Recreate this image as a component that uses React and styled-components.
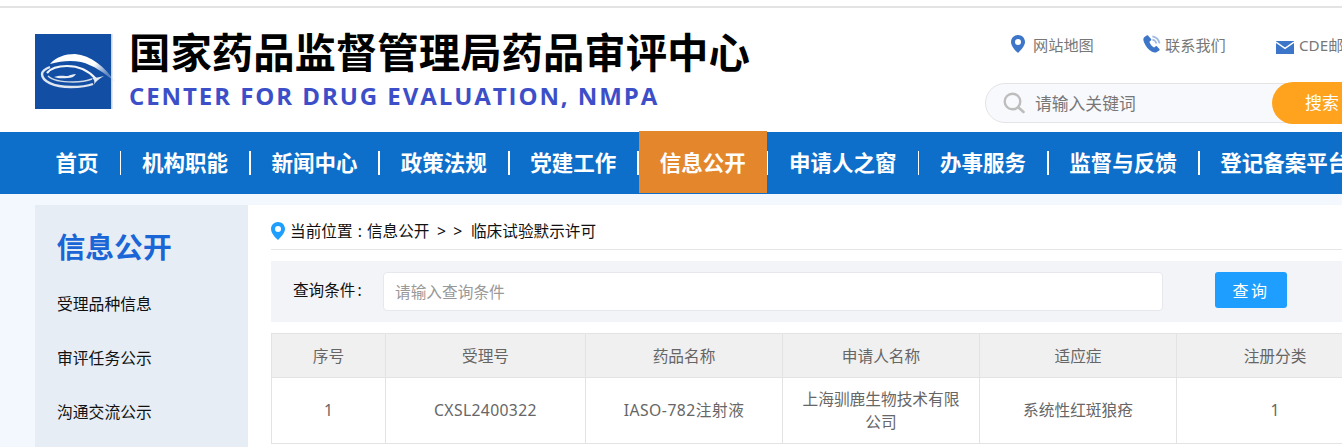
import React from "react";
import styled, { createGlobalStyle } from "styled-components";

const GlobalStyle = createGlobalStyle`
  html, body {
    margin: 0;
    padding: 0;
    overflow: hidden;
    background: #fff;
    font-family: "Noto Sans", "Noto Sans CJK SC", sans-serif;
  }
  * { box-sizing: border-box; }
`;

const Page = styled.div`
  width: 1400px;
  height: 447px;
  overflow: hidden;
  padding-top: 6px;
`;

const Header = styled.header`
  height: 126px;
  border-top: 2px solid #e3e3e3;
  display: flex;
  padding-left: 35px;
`;

const Brand = styled.div`
  display: flex;
  align-items: flex-start;
  gap: 18px;
  padding-top: 26px;
  width: 950px;
`;

const LogoBox = styled.svg`
  display: block;
  flex: none;
  margin-right: -6px;
`;

const BrandText = styled.div`
  display: flex;
  flex-direction: column;
`;

const BrandTitle = styled.div`
  font-family: "Noto Sans CJK SC", sans-serif;
  font-size: 41.4px;
  font-weight: 700;
  line-height: 42px;
  color: #000;
  margin-top: -5px;
  white-space: nowrap;
`;

const BrandSub = styled.div`
  font-family: "Open Sans", "Noto Sans", sans-serif;
  font-size: 24px;
  font-weight: 700;
  line-height: 30px;
  letter-spacing: 1.93px;
  color: #3c4fc9;
  margin-top: 10px;
  white-space: nowrap;
`;

const HeaderRight = styled.div`
  width: 415px;
  display: flex;
  flex-direction: column;
`;

const TopLinks = styled.div`
  display: flex;
  height: 75px;
  padding: 26px 0 0 26px;
  align-items: flex-start;
`;

const TopLink = styled.a`
  display: flex;
  flex: none;
  align-items: center;
  gap: ${(p) => p.$gap}px;
  width: ${(p) => p.$width}px;
  height: 20px;
  font-size: 15.2px;
  color: #777;
  white-space: nowrap;
`;

const MailSvg = styled.svg`
  margin-top: 6px;
`;

const SearchBar = styled.div`
  position: relative;
  height: 40px;
  width: 415px;
  border: 1px solid #e4e4e4;
  border-radius: 20px;
  background: #f8f9fd;
  display: flex;
  align-items: center;
  padding-left: 17px;
  gap: 10px;
`;

const SearchHint = styled.span`
  font-size: 16.8px;
  color: #777;
`;

const SearchButton = styled.div`
  position: absolute;
  top: -2px;
  left: 286px;
  width: 128px;
  height: 42px;
  border-radius: 21px;
  background: #ffa31f;
  color: #fff;
  font-size: 17px;
  line-height: 42px;
  padding-left: 33px;
`;

const Nav = styled.nav`
  height: 62px;
  background: #0e6fca;
  display: flex;
  align-items: stretch;
  padding-left: 35px;
`;

const NavItem = styled.a`
  display: flex;
  align-items: center;
  padding: 0 21px 3px 20.6px;
  font-size: 21.5px;
  font-weight: 700;
  color: #fff;
  white-space: nowrap;
  ${(p) =>
    p.$active &&
    `
    background: #e3862c;
    height: 62px;
    margin-top: -1px;
    padding-bottom: 2px;
  `}
`;

const NavSep = styled.span`
  flex: none;
  width: 1.8px;
  height: 24px;
  align-self: center;
  background: #fff;
  position: relative;
  z-index: 1;
`;

const Body = styled.div`
  background: #f3f8ff;
  padding: 11px 0 0 35px;
  height: 253px;
  display: flex;
`;

const Sidebar = styled.aside`
  width: 213px;
  flex: none;
  background: #e7edf5;
  padding: 24px 0 0 22px;
`;

const SideTitle = styled.div`
  font-size: 28.8px;
  font-weight: 700;
  line-height: 36px;
  color: #1a66d6;
  margin-bottom: 12px;
  margin-left: -0.5px;
`;

const SideItem = styled.div`
  height: 54px;
  line-height: 54px;
  font-size: 15.8px;
  color: #111;
`;

const Main = styled.main`
  flex: 1;
  background: #fff;
  padding: 0 0 0 23px;
`;

const Crumbs = styled.div`
  height: 45px;
  border-bottom: 1px solid #e6e6e6;
  display: flex;
  align-items: center;
  gap: 5px;
  padding-top: 7px;
  font-size: 15.65px;
  color: #111;
  white-space: pre;
`;

const CrumbTrail = styled.span`
  word-spacing: 1px;
`;

const CrumbArrows = styled.span`
  display: inline-block;
  margin: 0 1.4px 0 7.5px;
`;

const CrumbArrow = styled.span`
  display: inline-block;
  width: 16.3px;
`;

const QueryPanel = styled.div`
  margin-top: 11px;
  height: 61px;
  background: #f3f4f8;
  display: flex;
  align-items: flex-start;
  padding: 11px 0 0 22px;
`;

const QueryLabel = styled.label`
  width: 90px;
  flex: none;
  height: 39px;
  line-height: 37px;
  font-size: 15.6px;
  color: #111;
  word-spacing: -2px;
`;

const QueryInput = styled.div`
  width: 780px;
  height: 39px;
  line-height: 39px;
  flex: none;
  background: #fff;
  border: 1px solid #e6e8ee;
  border-radius: 4px;
  padding-left: 11px;
  font-size: 15.7px;
  color: #999;
`;

const QueryButton = styled.button`
  margin-left: 52px;
  width: 72px;
  height: 36px;
  border: 0;
  border-radius: 3px;
  background: #1e9fff;
  color: #fff;
  font-family: inherit;
  font-size: 16px;
  letter-spacing: 2.5px;
`;

const Table = styled.table`
  margin-top: 11px;
  width: 1102px;
  table-layout: fixed;
  border-collapse: collapse;
  font-size: 15.7px;
  color: #666;
  text-align: center;
`;

const Th = styled.th`
  height: 44px;
  font-weight: 400;
  background: #f0f0f0;
  border: 1px solid #e3e3e3;
  width: ${(p) => p.$width}px;
`;

const Td = styled.td`
  height: 66px;
  padding: 0 15px;
  line-height: 23px;
  border: 1px solid #e3e3e3;
  letter-spacing: ${(p) => p.$tracking || 0}px;
`;

const PinIcon = ({ color, size = 18 }) => (
  <svg width={size * 0.78} height={size} viewBox="0 0 14 18">
    <path
      fillRule="evenodd"
      fill={color}
      d="M7 0C3.1 0 0 3.1 0 6.9c0 4.2 4.4 8.7 7 11.1 2.6-2.4 7-6.9 7-11.1C14 3.1 10.9 0 7 0zm0 3.9a3 3 0 1 1 0 6 3 3 0 0 1 0-6z"
    />
  </svg>
);

const PhoneIcon = () => (
  <svg width="18" height="18" viewBox="0 0 18 18">
    <path
      fill="#3d76c9"
      d="M3.6 0.6 1.2 2.2C0 3.2 0.2 5.2 1 7.2c1.4 3.6 4.4 7.6 8 9.6 2 1.1 3.7 1 4.8 0.2l2.4-1.6c0.6-0.5 0.6-1 0.2-1.5l-2.4-2.4c-0.5-0.5-1-0.5-1.5-0.1l-1.5 1.1c-1.9-0.9-4-3.6-4.6-5.8l1.5-1.2c0.5-0.4 0.5-0.9 0.2-1.4L5.2 0.8C4.7 0.2 4.2 0.2 3.6 0.6z"
    />
    <path
      fill="none"
      stroke="#9db8e2"
      strokeWidth="1.8"
      d="M9.4 1.4c3.4 0.6 6.4 3.4 7.2 7"
    />
    <path
      fill="none"
      stroke="#9db8e2"
      strokeWidth="1.6"
      d="M9.4 4.6c1.8 0.4 3.4 1.8 4 3.8"
    />
  </svg>
);

const MailIcon = () => (
  <MailSvg width="18" height="13" viewBox="0 0 18 13">
    <rect width="18" height="13" fill="#3d76c9" />
    <path d="M0 1.2 9 7.4l9-6.2" fill="none" stroke="#fff" strokeWidth="1.4" />
  </MailSvg>
);

const SearchIcon = () => (
  <svg width="22" height="22" viewBox="0 0 22 22">
    <circle cx="9.5" cy="9.5" r="7.8" fill="none" stroke="#bdbdbd" strokeWidth="2.4" />
    <path d="M15.5 15.5 20.5 20" stroke="#bdbdbd" strokeWidth="2.6" strokeLinecap="round" />
  </svg>
);

const Logo = () => (
  <LogoBox width="82" height="75" viewBox="0 0 82 75">
    <defs>
      <filter id="soft" x="-10%" y="-10%" width="120%" height="120%">
        <feGaussianBlur stdDeviation="0.7" />
      </filter>
      <linearGradient id="fade" x1="0" x2="1" y1="0" y2="0.4">
        <stop offset="0.7" stopColor="#ffffff" />
        <stop offset="1" stopColor="#c9d6e8" stopOpacity="0.4" />
      </linearGradient>
    </defs>
    <rect width="76" height="75" fill="#124ea3" />
    <rect x="76" width="1.5" height="75" fill="#c6d4ea" />
    <g filter="url(#soft)">
      <path
        d="M15 30C21 23 30 20 40 20 56 21 70 33 81 49 70 39 58 31 46 28 36 26 26 27 15 30z"
        fill="url(#fade)"
      />
      <path
        d="M15 33C10 35 7 37 7 40 7 47 18 53 36 53 46 53 53 52 58 50"
        fill="none"
        stroke="#dfe6f0"
        strokeWidth="2.4"
      />
      <path
        d="M12 39C16 34 24 32 32 32 44 32 54 37 61 45"
        fill="none"
        stroke="#f2f5fa"
        strokeWidth="2.2"
      />
      <path
        d="M13 42C17 46 27 48 38 48 46 48 52 47 57 45"
        fill="none"
        stroke="#cfd9e8"
        strokeWidth="1.4"
      />
      <path
        d="M57 44C60 46 60 49 58 52 60 49 63 45 69 42 65 43 60 44 57 44z"
        fill="#e6ebf3"
      />
      <path
        d="M19 43C24 41 30 42 33 42 35 41 38 40 41 40 39 43 36 44 33 44 29 44 24 45 19 43z"
        fill="#e9eef6"
      />
    </g>
  </LogoBox>
);

const navItems = [
  "首页",
  "机构职能",
  "新闻中心",
  "政策法规",
  "党建工作",
  "信息公开",
  "申请人之窗",
  "办事服务",
  "监督与反馈",
  "登记备案平台",
];

const columns = [
  ["序号", 114],
  ["受理号", 200],
  ["药品名称", 197],
  ["申请人名称", 197],
  ["适应症", 197],
  ["注册分类", 197],
];

const row = [
  { text: "1" },
  { text: "CXSL2400322", tracking: 0.37 },
  { text: "IASO-782注射液", tracking: 0.5 },
  { text: "上海驯鹿生物技术有限公司" },
  { text: "系统性红斑狼疮" },
  { text: "1" },
];

export default function App() {
  return (
    <Page>
      <GlobalStyle />
      <Header>
        <Brand>
          <Logo />
          <BrandText>
            <BrandTitle>国家药品监督管理局药品审评中心</BrandTitle>
            <BrandSub>CENTER FOR DRUG EVALUATION, NMPA</BrandSub>
          </BrandText>
        </Brand>
        <HeaderRight>
          <TopLinks>
            <TopLink $width={132} $gap={8}>
              <PinIcon color="#3d76c9" />
              网站地图
            </TopLink>
            <TopLink $width={133} $gap={4}>
              <PhoneIcon />
              联系我们
            </TopLink>
            <TopLink $width={140} $gap={5}>
              <MailIcon />
              CDE邮箱
            </TopLink>
          </TopLinks>
          <SearchBar>
            <SearchIcon />
            <SearchHint>请输入关键词</SearchHint>
            <SearchButton>搜索</SearchButton>
          </SearchBar>
        </HeaderRight>
      </Header>
      <Nav>
        {navItems.map((item, i) => (
          <React.Fragment key={item}>
            {i > 0 && <NavSep />}
            <NavItem $active={item === "信息公开"}>{item}</NavItem>
          </React.Fragment>
        ))}
      </Nav>
      <Body>
        <Sidebar>
          <SideTitle>信息公开</SideTitle>
          <SideItem>受理品种信息</SideItem>
          <SideItem>审评任务公示</SideItem>
          <SideItem>沟通交流公示</SideItem>
        </Sidebar>
        <Main>
          <Crumbs>
            <PinIcon color="#1e9fff" />
            <span>
              <CrumbTrail>当前位置 : 信息公开</CrumbTrail>
              <CrumbArrows>
                <CrumbArrow>&gt;</CrumbArrow>
                <CrumbArrow>&gt;</CrumbArrow>
              </CrumbArrows>
              临床试验默示许可
            </span>
          </Crumbs>
          <QueryPanel>
            <QueryLabel>查询条件 :</QueryLabel>
            <QueryInput>请输入查询条件</QueryInput>
            <QueryButton>查询</QueryButton>
          </QueryPanel>
          <Table>
            <thead>
              <tr>
                {columns.map(([name, width]) => (
                  <Th key={name} $width={width}>
                    {name}
                  </Th>
                ))}
              </tr>
            </thead>
            <tbody>
              <tr>
                {row.map((cell, i) => (
                  <Td key={i} $tracking={cell.tracking}>
                    {cell.text}
                  </Td>
                ))}
              </tr>
            </tbody>
          </Table>
        </Main>
      </Body>
    </Page>
  );
}
